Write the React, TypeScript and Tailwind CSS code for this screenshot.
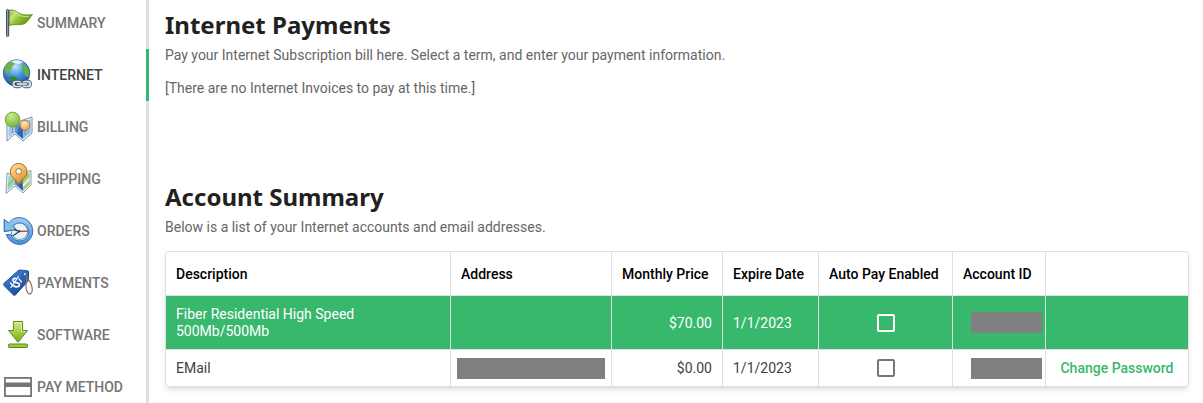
import type { ReactNode } from 'react'
import clsx from 'clsx'

function FlagIcon() {
  return (
    <svg viewBox="0 0 32 32" className="h-8 w-8 shrink-0" aria-hidden="true">
      <defs>
        <linearGradient id="flag" x1="0" y1="0" x2="1" y2="0.6">
          <stop offset="0" stopColor="#7fa82c" />
          <stop offset="0.3" stopColor="#c9e17a" />
          <stop offset="0.55" stopColor="#8fbe35" />
          <stop offset="1" stopColor="#5c9416" />
        </linearGradient>
      </defs>
      <path d="M7 3.5C11 2 14 4 17 6C20 8 25 8.500 30.500 7.500C28 10 27.500 13 23 16.500C19 19 12 16.500 7 18.500Z" fill="url(#flag)" stroke="#5f8d1c" strokeWidth="0.8" />
      <path d="M8 5C12 4 15 6 17 8C20 9.500 24 10 27 9.500" fill="none" stroke="#dff0a5" strokeWidth="0.9" opacity="0.8" />
      <rect x="4.500" y="2.500" width="2.200" height="27" rx="1" fill="#8d9bb0" stroke="#2f3b50" strokeWidth="0.9" />
    </svg>
  )
}

function GlobeIcon() {
  return (
    <svg viewBox="0 0 32 32" className="h-8 w-8 shrink-0" aria-hidden="true">
      <defs>
        <radialGradient id="sea" cx="0.45" cy="0.25" r="0.8">
          <stop offset="0" stopColor="#c9e6fc" />
          <stop offset="0.45" stopColor="#4a97e0" />
          <stop offset="1" stopColor="#12408f" />
        </radialGradient>
      </defs>
      <circle cx="14.500" cy="14" r="13.300" fill="url(#sea)" stroke="#2a5796" strokeWidth="0.7" />
      <path d="M2.500 9C4 5 7 3 10 2L13.500 3L12 6L9.500 7.500L10 10L7 12L6 15L3 13Z" fill="#6db544" />
      <path d="M7 18L12 17L16 20L13 24L11 26L8 23Z" fill="#2f8a32" />
      <path d="M20 5L25 7.500L27.300 13L26.500 18L23 17L22 13L20 11Z" fill="#62b044" />
      <path d="M9 2.500C13 0.500 18 1 21 3L17 5L12 4Z" fill="#f2f8fd" opacity="0.9" />
      <g fill="none">
        <rect x="11.500" y="22.500" width="7.500" height="5" rx="2.500" stroke="#4a5a72" strokeWidth="3.300" />
        <rect x="21" y="22.500" width="7.500" height="5" rx="2.500" stroke="#4a5a72" strokeWidth="3.300" />
        <rect x="11.500" y="22.500" width="7.500" height="5" rx="2.500" fill="#2b4a78" stroke="#dbe5ef" strokeWidth="1.700" />
        <rect x="21" y="22.500" width="7.500" height="5" rx="2.500" fill="#8392a6" stroke="#dbe5ef" strokeWidth="1.700" />
        <path d="M15.500 25H24.500" stroke="#4a5a72" strokeWidth="3" strokeLinecap="round" />
        <path d="M15.500 25H24.500" stroke="#f1f5f9" strokeWidth="1.600" strokeLinecap="round" />
      </g>
    </svg>
  )
}

function BillingIcon() {
  return (
    <svg viewBox="0 0 32 32" className="h-8 w-8 shrink-0" aria-hidden="true">
      <defs>
        <radialGradient id="greenPin" cx="0.4" cy="0.25" r="0.8">
          <stop offset="0" stopColor="#c9ec8c" />
          <stop offset="1" stopColor="#76b733" />
        </radialGradient>
        <radialGradient id="orangePin" cx="0.4" cy="0.25" r="0.8">
          <stop offset="0" stopColor="#ffe9bd" />
          <stop offset="1" stopColor="#eda348" />
        </radialGradient>
      </defs>
      <path d="M5 9L13 12L21 9L30 6V22L21 30L13 23L5 30Z" fill="#f3f7fc" stroke="#6a82aa" strokeWidth="0.9" />
      <path d="M6.500 11L13 14V21.500L6.500 27Z" fill="#a5c8ec" />
      <path d="M13 14L21 11V28L13 21.500Z" fill="#5b93d4" />
      <path d="M17 16L21 14V28L15 23Z" fill="#2f69b4" />
      <path d="M21 11L28.700 8V21.500L21 28Z" fill="#94bce8" />
      <path d="M10.500 15V22M23 19V24" stroke="#7c8897" strokeWidth="0.900" />
      <circle cx="10.500" cy="8.500" r="7.400" fill="url(#greenPin)" stroke="#5f9a2c" strokeWidth="0.8" />
      <circle cx="23" cy="14.300" r="4.900" fill="url(#orangePin)" stroke="#b0712a" strokeWidth="0.8" />
    </svg>
  )
}

function ShippingIcon() {
  return (
    <svg viewBox="0 0 32 32" className="h-8 w-8 shrink-0" aria-hidden="true">
      <defs>
        <linearGradient id="pin" x1="0" y1="0" x2="0.6" y2="1">
          <stop offset="0" stopColor="#ffe4ac" />
          <stop offset="0.5" stopColor="#f8bd62" />
          <stop offset="1" stopColor="#dd8c35" />
        </linearGradient>
      </defs>
      <path d="M5 10L13 13L21 10L29 7.500V22L21 30L13 23L4 30.500Z" fill="#eff4f9" stroke="#7187ab" strokeWidth="0.8" />
      <path d="M6.300 12L13 14.500V21.500L5.500 28Z" fill="#a5d2df" />
      <path d="M6 20L12 15L13 17L5.800 24Z" fill="#9ccb50" />
      <path d="M13 14L21 12V28L13 21.500Z" fill="#5587c0" />
      <path d="M16 22L20 20L21 28Z" fill="#2f5c9c" />
      <path d="M21 12L27.700 9.500V21.500L21 28Z" fill="#a8cf60" />
      <path d="M21 21L27.700 14V17L21 24.500Z" fill="#e5f0fa" />
      <path d="M16.700 21.500C15.500 17.500 8.300 14.500 8.300 8.800A8.400 8.400 0 0 1 25.100 8.800C25.100 14.500 17.900 17.500 16.700 21.500Z" fill="url(#pin)" stroke="#966023" strokeWidth="0.9" />
      <circle cx="16.700" cy="8.400" r="2.900" fill="#f7f5ef" stroke="#a07339" strokeWidth="1" />
    </svg>
  )
}

function OrdersIcon() {
  return (
    <svg viewBox="0 0 32 32" className="h-8 w-8 shrink-0" aria-hidden="true">
      <defs>
        <linearGradient id="clock" x1="0" y1="0" x2="0" y2="1">
          <stop offset="0" stopColor="#9bcdf4" />
          <stop offset="1" stopColor="#4b8fd2" />
        </linearGradient>
      </defs>
      <path d="M2.300 4.500L6.500 8C9 4.500 13 2.500 17.500 2.500A13.500 13.500 0 1 1 4.300 19.500H9A9 9 0 1 0 11 10.800L14.500 14.500L2.300 16.500Z" fill="url(#clock)" stroke="#2d66a7" strokeWidth="0.9" />
      <circle cx="17.500" cy="16.300" r="8.200" fill="#e9f1f8" stroke="#3f79b8" strokeWidth="0.8" />
      <path d="M2.300 4.500L6.500 8C8 6 9.500 5 11 4.200L10.500 10.500L14.500 14.500L2.300 16.500Z" fill="#83bdec" />
      <path d="M2.300 16.500V4.500L6.500 8M2.300 16.500L14.500 14.500L11 10.800" fill="none" stroke="#2d66a7" strokeWidth="0.9" />
      <path d="M17.500 16.300L11.500 20.500M17.500 16.300L12.500 14.800" stroke="#34404d" strokeWidth="1.300" strokeLinecap="round" />
      <path d="M16.500 16.300H25.500" stroke="#d8402f" strokeWidth="1.400" />
      <circle cx="17.300" cy="16.300" r="1.100" fill="#2c3440" />
    </svg>
  )
}

function PaymentsIcon() {
  return (
    <svg viewBox="0 0 32 32" className="h-8 w-8 shrink-0" aria-hidden="true">
      <defs>
        <linearGradient id="tag" x1="0" y1="0" x2="0.7" y2="1">
          <stop offset="0" stopColor="#5b9ae0" />
          <stop offset="0.5" stopColor="#2c68b8" />
          <stop offset="1" stopColor="#1b4a94" />
        </linearGradient>
      </defs>
      <path d="M1.800 16.500Q1 17.500 2 18.600L11.500 28Q12.600 29 13.600 27.800L26.500 13.500V5Q26.500 4 25.500 3.800L18 3Q17 3 16 3.800Z" fill="url(#tag)" stroke="#18427f" strokeWidth="0.9" />
      <circle cx="23" cy="7" r="1.500" fill="#fff" stroke="#18427f" strokeWidth="0.7" />
      <path d="M23.500 7.500C26 10 24.500 14 24 18C23.500 23 26 28.500 29 26.500C31.500 24 30 16 26 12" fill="none" stroke="#93705e" strokeWidth="1.200" />
      <g fill="none" stroke="#fff" strokeWidth="1.700" strokeLinecap="round">
        <path d="M14 11.500C11 11 10 13.500 12 15C14 16 17 15.500 17.500 17.500C17.500 20 14 20.500 12 19" />
        <path d="M16.500 9.500L9 20.500" strokeWidth="1.200" />
        <path d="M8.500 16L11 19M17 12L19.500 15" strokeWidth="1.200" />
      </g>
    </svg>
  )
}

function SoftwareIcon() {
  return (
    <svg viewBox="0 0 32 32" className="h-8 w-8 shrink-0" aria-hidden="true">
      <defs>
        <linearGradient id="down" x1="0" y1="0" x2="0" y2="1">
          <stop offset="0" stopColor="#d3e98a" />
          <stop offset="0.5" stopColor="#a4cf45" />
          <stop offset="1" stopColor="#74a81d" />
        </linearGradient>
      </defs>
      <path d="M11.400 2.500H20.600V11.500H25.500L16 23.300L6.500 11.500H11.400Z" fill="url(#down)" stroke="#5d8a1c" strokeWidth="1" strokeLinejoin="round" />
      <path d="M12.500 3.600H19.500V12.600H23.200" fill="none" stroke="#e6f4b8" strokeWidth="0.7" />
      <rect x="6.500" y="25" width="19" height="3.500" rx="0.700" fill="#9cca3c" stroke="#5d8a1c" strokeWidth="1" />
    </svg>
  )
}

function CardIcon() {
  return (
    <svg viewBox="0 0 32 32" className="h-8 w-8 shrink-0" aria-hidden="true">
      <rect x="2.900" y="6.900" width="26.200" height="18.200" fill="none" stroke="#757575" strokeWidth="1.800" />
      <rect x="3" y="11.500" width="26" height="4.500" fill="#757575" />
    </svg>
  )
}

interface NavItem {
  label: string
  icon: ReactNode
  active?: boolean
}

const navItems: NavItem[] = [
  { label: 'SUMMARY', icon: <FlagIcon /> },
  { label: 'INTERNET', icon: <GlobeIcon />, active: true },
  { label: 'BILLING', icon: <BillingIcon /> },
  { label: 'SHIPPING', icon: <ShippingIcon /> },
  { label: 'ORDERS', icon: <OrdersIcon /> },
  { label: 'PAYMENTS', icon: <PaymentsIcon /> },
  { label: 'SOFTWARE', icon: <SoftwareIcon /> },
  { label: 'PAY METHOD', icon: <CardIcon /> },
]

interface Account {
  description: string
  addressHidden: boolean
  price: string
  expires: string
  selected: boolean
}

const accounts: Account[] = [
  { description: 'Fiber Residential High Speed 500Mb/500Mb', addressHidden: false, price: '$70.00', expires: '1/1/2023', selected: true },
  { description: 'EMail', addressHidden: true, price: '$0.00', expires: '1/1/2023', selected: false },
]

const headers = ['Description', 'Address', 'Monthly Price', 'Expire Date', 'Auto Pay Enabled', 'Account ID', '']

function Sidebar() {
  return (
    <nav className="-mt-[3px] flex w-[149px] shrink-0 flex-col">
      {navItems.map((item) => (
        <a
          key={item.label}
          href="#"
          aria-current={item.active ? 'page' : undefined}
          className={clsx(
            'flex h-[52px] shrink-0 items-center gap-[3px] border-r-3 pl-[2px] text-sm font-medium whitespace-nowrap',
            item.active ? 'border-[#37b86c] text-[#424242]' : 'border-[#e0e0e0] text-[#757575]',
          )}
        >
          {item.icon}
          {item.label}
        </a>
      ))}
    </nav>
  )
}

function AccountRow({ account }: { account: Account }) {
  const cell = 'border-t border-l border-[#e0e0e0] first:border-l-0'

  return (
    <tr className={account.selected ? 'h-[54px] bg-[#37b86c] text-white' : 'h-[37px] text-[#424242]'}>
      <td className={clsx(cell, 'px-[10px] pt-px leading-[17px]')}>
        <div className="max-w-[200px]">{account.description}</div>
      </td>
      <td className={clsx(cell, 'px-[6px]')}>
        {account.addressHidden && <div className="h-[21px] bg-[#808080]" />}
      </td>
      <td className={clsx(cell, 'px-[10px] text-right')}>{account.price}</td>
      <td className={clsx(cell, 'px-[10px]')}>{account.expires}</td>
      <td className={cell}>
        <input
          type="checkbox"
          aria-label={`Auto pay for ${account.description}`}
          className={clsx(
            'mx-auto block h-[18px] w-[18px] appearance-none rounded-xs border-2',
            account.selected ? 'border-white' : 'border-[#757575]',
          )}
        />
      </td>
      <td className={clsx(cell, 'pr-[3px]')}>
        <div className="ml-auto h-[21px] w-[71px] bg-[#808080]" />
      </td>
      <td className={clsx(cell, 'text-center')}>
        {!account.selected && (
          <button type="button" className="font-medium text-[#37b86c]">
            Change Password
          </button>
        )}
      </td>
    </tr>
  )
}

export default function App() {
  return (
    <div className="flex h-screen overflow-hidden bg-white font-['Roboto',sans-serif] text-sm">
      <Sidebar />
      <main className="min-w-0 flex-1 pt-2 pr-[14px] pl-4 text-[#666]">
        <section className="h-[172px]">
          <h1 className="mb-[2px] font-['Noto_Sans',sans-serif] text-2xl leading-[34px] font-bold text-[#212121]">
            Internet Payments
          </h1>
          <p className="leading-[22px]">
            Pay your Internet Subscription bill here. Select a term, and enter your payment information.
          </p>
          <p className="mt-[11px] leading-[22px]">[There are no Internet Invoices to pay at this time.]</p>
        </section>

        <section>
          <h2 className="mb-[2px] font-['Noto_Sans',sans-serif] text-2xl leading-[34px] font-bold text-[#212121]">
            Account Summary
          </h2>
          <p className="leading-[22px]">Below is a list of your Internet accounts and email addresses.</p>

          <div className="mt-[13px] overflow-hidden rounded-sm border border-[#e0e0e0] shadow-md">
            <table className="w-full table-fixed border-separate border-spacing-0">
              <colgroup>
                <col />
                <col className="w-[161px]" />
                <col className="w-[111px]" />
                <col className="w-[96px]" />
                <col className="w-[134px]" />
                <col className="w-[93px]" />
                <col className="w-[143px]" />
              </colgroup>
              <thead>
                <tr className="h-[43px] text-left text-black">
                  {headers.map((header) => (
                    <th key={header} className="border-l border-[#e0e0e0] px-[10px] pt-px font-medium whitespace-nowrap first:border-l-0">
                      {header}
                    </th>
                  ))}
                </tr>
              </thead>
              <tbody>
                {accounts.map((account) => (
                  <AccountRow key={account.description} account={account} />
                ))}
              </tbody>
            </table>
          </div>
        </section>
      </main>
    </div>
  )
}
